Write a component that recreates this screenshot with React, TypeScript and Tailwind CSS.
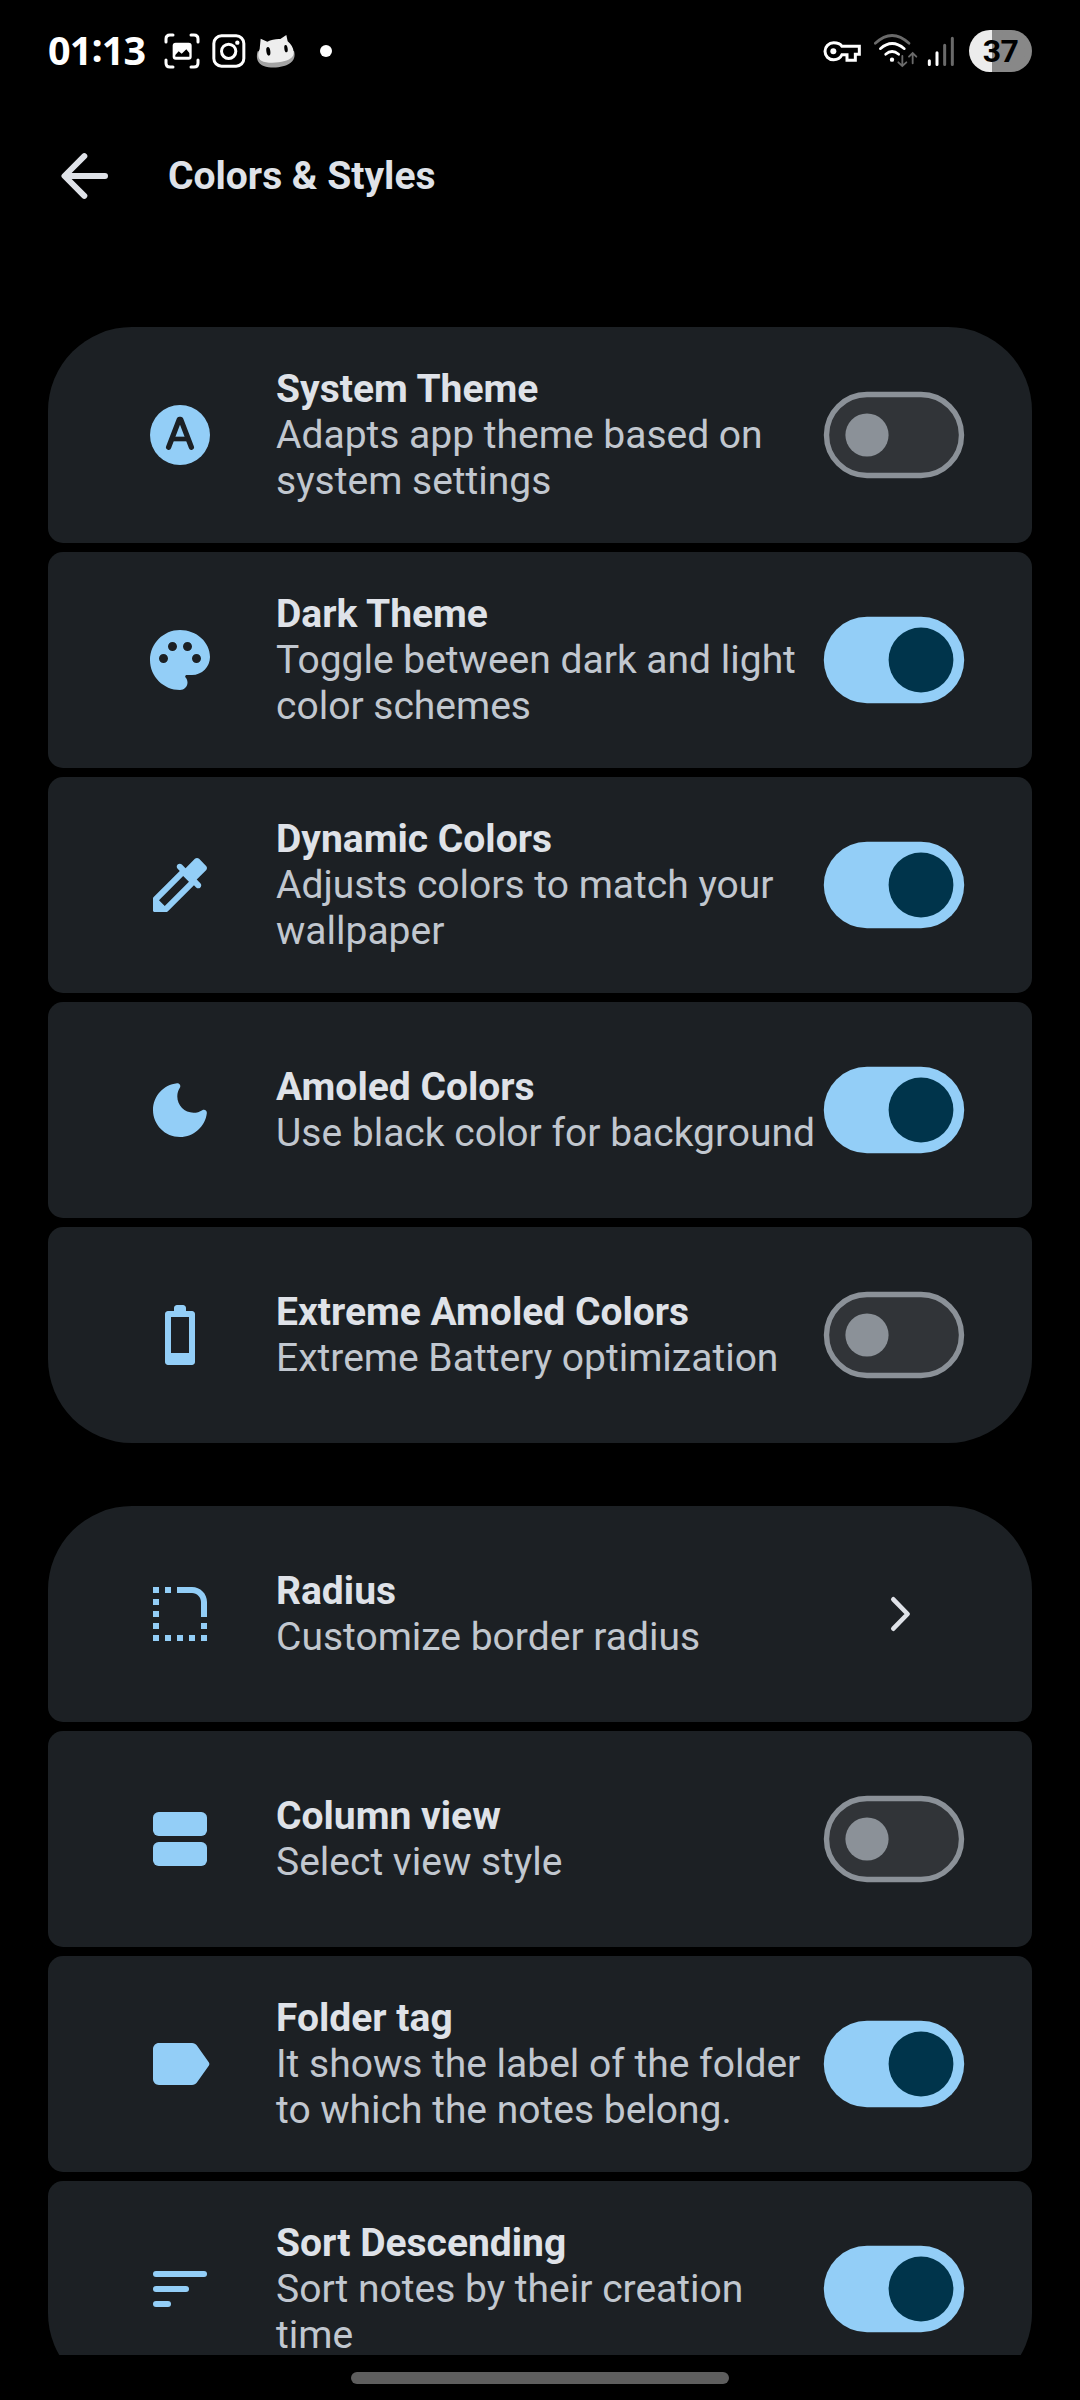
import type { ReactNode } from "react";

function Glyph({ children }: { children: ReactNode }) {
  return (
    <svg viewBox="0 0 24 24" className="h-[72px] w-[72px] shrink-0 fill-[#93cef7]">
      {children}
    </svg>
  );
}

const AutoIcon = () => (
  <Glyph>
    <circle cx="12" cy="12" r="10" />
    <path
      d="M8.200 16.100L11.750 6.800h.5L15.800 16.100"
      fill="none"
      stroke="#1c2024"
      strokeWidth="1.750"
      strokeLinecap="round"
      strokeLinejoin="round"
    />
    <path d="M9.400 13.330h5.200" stroke="#1c2024" strokeWidth="1.550" />
  </Glyph>
);

const PaletteIcon = () => (
  <Glyph>
    <path d="M12 2C6.49 2 2 6.49 2 12s4.49 10 10 10c1.38 0 2.5-1.12 2.5-2.5 0-.61-.23-1.2-.64-1.67-.08-.1-.13-.21-.13-.33 0-.28.22-.5.5-.5H16c3.31 0 6-2.69 6-6 0-4.96-4.49-9-10-9zm5.5 11c-.83 0-1.5-.67-1.5-1.5s.67-1.5 1.5-1.5 1.5.67 1.5 1.5-.67 1.5-1.5 1.5zm-3-4c-.83 0-1.5-.67-1.5-1.5S13.67 6 14.5 6s1.5.67 1.5 1.5S15.33 9 14.5 9zM5 11.500c0-.83.67-1.5 1.5-1.5s1.500.67 1.500 1.500-.67 1.500-1.500 1.500S5 12.330 5 11.500zm6-4c0 .83-.67 1.500-1.500 1.500S8 8.330 8 7.500 8.670 6 9.500 6s1.500.67 1.500 1.500z" />
  </Glyph>
);

const DropperIcon = () => (
  <Glyph>
    <path d="M20.71 5.63l-2.34-2.34c-.39-.39-1.02-.39-1.41 0l-3.12 3.12-1.22-1.21c-.39-.39-1.02-.39-1.41 0-.39.39-.39 1.02 0 1.41l.71.72-8.77 8.77c-.1.1-.15.22-.15.36v4.04c0 .28.22.5.5.5h4.04c.13 0 .26-.05.35-.15l8.77-8.77.72.72c.39.39 1.02.39 1.41 0 .39-.39.39-1.02 0-1.41l-1.22-1.22 3.12-3.12c.41-.4.41-1.03.02-1.42zM6.92 19L5 17.08l8.06-8.06 1.92 1.92L6.92 19z" />
  </Glyph>
);

const MoonIcon = () => (
  <Glyph>
    <path d="M11.01 3.05C6.51 3.54 3 7.36 3 12c0 4.97 4.03 9 9 9 4.63 0 8.45-3.5 8.95-8 .09-.79-.78-1.42-1.54-.95-.84.54-1.84.85-2.91.85-2.98 0-5.4-2.42-5.4-5.4 0-1.06.31-2.06.84-2.89.45-.67-.04-1.63-.93-1.56z" />
  </Glyph>
);

const BatteryIcon = () => (
  <Glyph>
    <path
      fillRule="evenodd"
      d="M16 4h-2V3c0-.55-.45-1-1-1h-2c-.55 0-1 .45-1 1v1H8c-.55 0-1 .45-1 1v16c0 .55.45 1 1 1h8c.55 0 1-.45 1-1V5c0-.55-.45-1-1-1zM15 18H9V6h6v12z"
    />
  </Glyph>
);

const RadiusIcon = () => (
  <Glyph>
    <path d="M3 3h2v2H3zM7 3h2v2H7zM3 7h2v2H3zM3 11h2v2H3zM3 15h2v2H3zM3 19h2v2H3zM7 19h2v2H7zM11 19h2v2h-2zM15 19h2v2h-2zM19 19h2v2h-2zM19 15h2v2h-2zM11 3h5c2.760 0 5 2.240 5 5v5h-2V8c0-1.650-1.350-3-3-3h-5z" />
  </Glyph>
);

const AgendaIcon = () => (
  <Glyph>
    <rect x="3" y="3" width="18" height="8" rx="1.9" />
    <rect x="3" y="13" width="18" height="8" rx="1.9" />
  </Glyph>
);

const LabelIcon = () => (
  <Glyph>
    <path d="M17.63 5.84C17.27 5.33 16.67 5 16 5L5 5.01C3.9 5.01 3 5.9 3 7v10c0 1.1.9 1.99 2 1.99L16 19c.67 0 1.27-.33 1.63-.84l3.96-5.58c.25-.35.25-.81 0-1.16l-3.96-5.58z" />
  </Glyph>
);

const SortIcon = () => (
  <Glyph>
    <rect x="3" y="6" width="18" height="2" rx="1" />
    <rect x="3" y="11" width="12" height="2" rx="1" />
    <rect x="3" y="16" width="6" height="2" rx="1" />
  </Glyph>
);

function Toggle({ on }: { on: boolean }) {
  return on ? (
    <div className="flex h-24 w-[156px] shrink-0 scale-90 items-center justify-end rounded-full bg-[#93cef7] pr-3">
      <div className="h-[72px] w-[72px] rounded-full bg-[#00344b]" />
    </div>
  ) : (
    <div className="flex h-24 w-[156px] shrink-0 scale-90 items-center rounded-full border-[6px] border-[#8b9198] bg-[#313438] pl-[18px]">
      <div className="h-12 w-12 rounded-full bg-[#8b9198]" />
    </div>
  );
}

function Chevron() {
  return (
    <div className="flex w-[156px] shrink-0 justify-center">
      <svg viewBox="0 0 24 40" className="mr-[-12px] h-10 w-6 fill-none stroke-[#dfe2e8]">
        <path d="M5.300 5.300L19.600 20 5.300 34.700" strokeWidth="4.600" strokeLinecap="round" strokeLinejoin="round" />
      </svg>
    </div>
  );
}

type Item = {
  title: string;
  lines: string[];
  icon: ReactNode;
  control: ReactNode;
};

const themeItems: Item[] = [
  { title: "System Theme", lines: ["Adapts app theme based on", "system settings"], icon: <AutoIcon />, control: <Toggle on={false} /> },
  { title: "Dark Theme", lines: ["Toggle between dark and light", "color schemes"], icon: <PaletteIcon />, control: <Toggle on /> },
  { title: "Dynamic Colors", lines: ["Adjusts colors to match your", "wallpaper"], icon: <DropperIcon />, control: <Toggle on /> },
  { title: "Amoled Colors", lines: ["Use black color for background"], icon: <MoonIcon />, control: <Toggle on /> },
  { title: "Extreme Amoled Colors", lines: ["Extreme Battery optimization"], icon: <BatteryIcon />, control: <Toggle on={false} /> },
];

const layoutItems: Item[] = [
  { title: "Radius", lines: ["Customize border radius"], icon: <RadiusIcon />, control: <Chevron /> },
  { title: "Column view", lines: ["Select view style"], icon: <AgendaIcon />, control: <Toggle on={false} /> },
  { title: "Folder tag", lines: ["It shows the label of the folder", "to which the notes belong."], icon: <LabelIcon />, control: <Toggle on /> },
  { title: "Sort Descending", lines: ["Sort notes by their creation", "time"], icon: <SortIcon />, control: <Toggle on /> },
];

function Group({ items }: { items: Item[] }) {
  return (
    <section className="flex flex-col gap-[9px]">
      {items.map((item) => (
        <div
          key={item.title}
          className="flex h-[216px] shrink-0 items-center rounded-[15px] bg-[#1c2024] pr-[60px] pl-24 first:rounded-t-[84px] last:rounded-b-[84px]"
        >
          {item.icon}
          <div className="ml-[60px] min-w-0 flex-1 text-[39px] leading-[46px] whitespace-nowrap">
            <h2 className="font-bold text-[#dfe2e8]">{item.title}</h2>
            {item.lines.map((line) => (
              <p key={line} className="text-[#c1c7cf]">
                {line}
              </p>
            ))}
          </div>
          {item.control}
        </div>
      ))}
    </section>
  );
}

function StatusBar() {
  return (
    <div className="flex h-[102px] shrink-0 items-center justify-between pr-[48px] pl-[48px]">
      <div className="flex items-center">
        <span className="w-[116px] font-['Open_Sans'] text-[39.5px] leading-none font-bold tracking-[-0.9px] text-white">
          01<span className="relative -top-[3px]">:</span>13
        </span>
        <svg viewBox="400 70 108 108" className="h-9 w-9" fill="none" stroke="#fff" strokeWidth="9" strokeLinecap="round">
          <path d="M406 97V88q0-12 12-12h9M481 76h9q12 0 12 12v9M406 151v9q0 12 12 12h9M481 172h9q12 0 12-12v-9" />
          <rect x="426" y="99" width="57" height="51" rx="9" fill="#fff" stroke="none" />
          <path d="M434 141v-5l10-11 9 7 14-13 9 11v11z" fill="#000" stroke="none" />
        </svg>
        <svg viewBox="545 73 102 102" className="ml-3 h-[34px] w-[34px]" fill="none" stroke="#fff" strokeWidth="9">
          <rect x="550.500" y="78.500" width="90" height="91" rx="23" />
          <circle cx="595" cy="125" r="21.500" />
          <circle cx="621" cy="99" r="6.500" fill="#fff" stroke="none" />
        </svg>
        <svg viewBox="677 73 120 105" className="ml-[10px] h-[35px] w-10">
          <path d="M682 125C676 145 681 162 700 169c26 9 62 4 80-9 13-9 15-24 11-36z" fill="#a3a3a3" />
          <path d="M691 87l20 9c12-6 27-9 39-8l18-12 4 19c10 9 17 19 18 31 2 15-11 24-27 28-24 7-55 7-70-1-12-7-10-23-5-35z" fill="#eee" />
          <ellipse cx="714" cy="125" rx="6" ry="13" fill="#000" transform="rotate(-8 714 125)" />
          <ellipse cx="767" cy="117" rx="5" ry="11" fill="#000" transform="rotate(-8 767 117)" />
        </svg>
        <div className="ml-6 h-3 w-3 rounded-full bg-white" />
      </div>
      <div className="flex items-center">
        <svg viewBox="69 90 114 69" className="h-[23px] w-[38px]">
          <path
            fill="none"
            stroke="#fff"
            strokeWidth="9"
            d="M126 109H178V133H166V151H141V134H126C121 144 112 149.500 101 149.500C86 149.500 75 138 75 124C75 110 86 98.500 101 98.500C112 98.500 121 102 126 109Z"
          />
          <circle cx="100" cy="124" r="9" fill="#fff" />
        </svg>
        <svg viewBox="219 68 135 108" className="ml-3 h-9 w-[45px]" fill="none" strokeLinecap="round">
          <path d="M226 99Q276 52 327 99" stroke="#6a6a6a" strokeWidth="8" />
          <path d="M241 115Q276 84 313 115" stroke="#fff" strokeWidth="8" />
          <path d="M257 132Q276 115 296 132" stroke="#fff" strokeWidth="8" />
          <circle cx="276" cy="148" r="6.500" fill="#fff" />
          <path d="M307 137V167M295 156l12 11 12-11M338 159V130M327 139l11-11 11 11" stroke="#6a6a6a" strokeWidth="5.500" />
        </svg>
        <svg viewBox="380 76 84 92" className="ml-[9px] h-[31px] w-7" strokeWidth="9" strokeLinecap="round">
          <path d="M387 150V161M410 126V161" stroke="#fff" />
          <path d="M433 103V161M456 82V161" stroke="#6a6a6a" />
        </svg>
        <div className="ml-[14px] flex h-[42px] w-[63px] items-center justify-center rounded-full bg-linear-to-r from-[#ececec] from-37% to-[#888] to-37% text-[32px] leading-none font-bold tracking-[-0.5px] text-black">
          37
        </div>
      </div>
    </div>
  );
}

export default function App() {
  return (
    <div className="flex h-[2400px] w-[1080px] flex-col overflow-hidden bg-black font-['Roboto',sans-serif]">
      <StatusBar />
      <header className="flex h-[148px] shrink-0 items-center pl-[60px]">
        <svg viewBox="0 0 48 48" className="h-12 w-12" fill="none" stroke="#dfe2e8" strokeWidth="6" strokeLinecap="round" strokeLinejoin="round">
          <path d="M45 24H5M24.300 4.200L4.500 24l19.800 19.800" />
        </svg>
        <h1 className="ml-[60px] text-[39px] leading-[46px] font-bold text-[#dfe2e8]">Colors &amp; Styles</h1>
      </header>
      <main className="flex min-h-0 flex-1 flex-col gap-[63px] overflow-hidden px-12 pt-[77px]">
        <Group items={themeItems} />
        <Group items={layoutItems} />
      </main>
      <div className="flex h-[45px] shrink-0 justify-center pt-[17px]">
        <div className="h-3 w-[378px] rounded-full bg-[#5e5e5e]" />
      </div>
    </div>
  );
}
